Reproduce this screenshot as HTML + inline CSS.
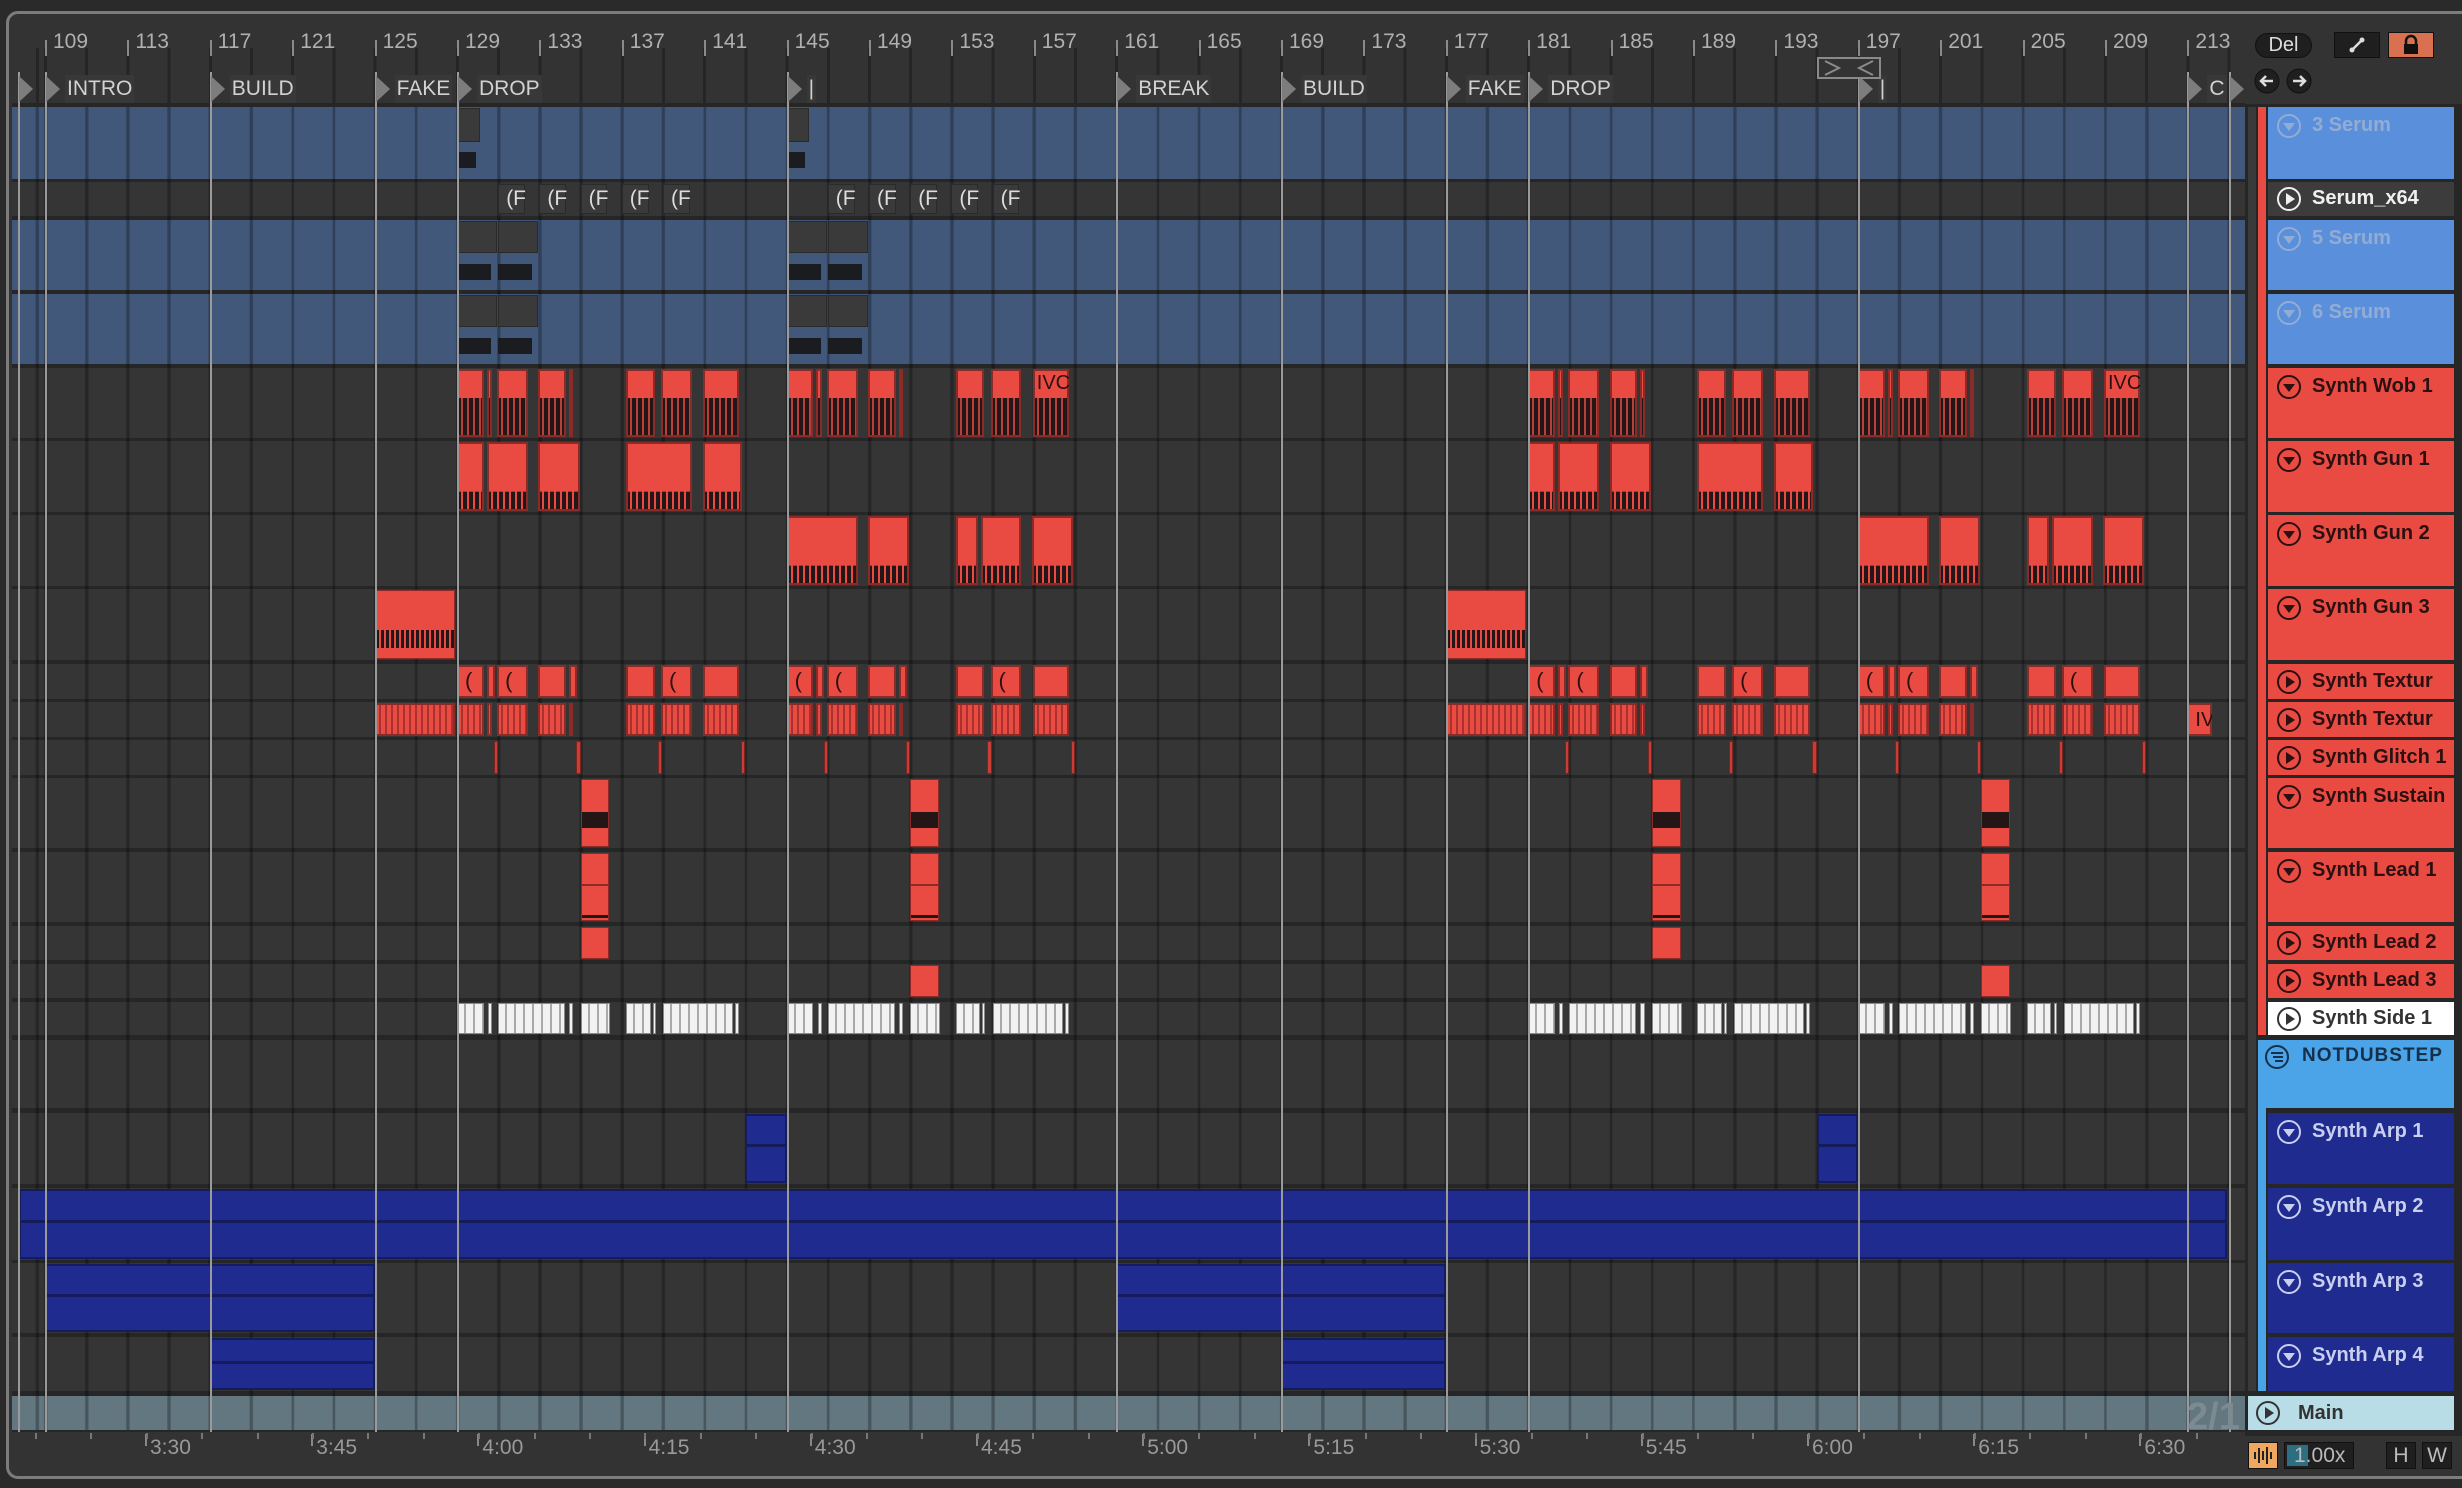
<!DOCTYPE html>
<html><head><meta charset="utf-8"><style>
*{margin:0;padding:0;box-sizing:border-box}
body{width:2462px;height:1488px;background:#2a2a2a;overflow:hidden;position:relative;font-family:"Liberation Sans",sans-serif}
.a{position:absolute}
#frame{left:6px;top:11px;width:2470px;height:1468px;border:3px solid #7c7c7c;border-radius:12px;background:#333}
.row{position:absolute;left:12px;width:2233px;background:#353535}
.serum{background:#41587a}
.mainrow{background:#627780}
.grid{position:absolute;left:12px;width:2233px;background:repeating-linear-gradient(90deg,rgba(0,0,0,.28) 0 3px,transparent 3px 41.2px);background-position:32px 0}
.cl{position:absolute}
.red{background:#e94b43;box-shadow:inset 0 0 0 1px #8a2b27}
.wob{background:linear-gradient(#e94b43,#e94b43) top/100% 43% no-repeat,repeating-linear-gradient(90deg,#241616 0 4px,#b8403a 4px 6px);box-shadow:inset 0 0 0 2px #8a2b27}
.gun{background:linear-gradient(#e94b43,#e94b43) top/100% 72% no-repeat,repeating-linear-gradient(90deg,#241616 0 4px,#e94b43 4px 6px);box-shadow:inset 0 0 0 2px #8a2b27}
.tx1{background:#e94b43;box-shadow:inset 0 0 0 2px #8a2b27;color:#2a1010;font-size:22px;line-height:32px;padding-left:8px;overflow:hidden}
.tx2{background:repeating-linear-gradient(90deg,#e94b43 0 4px,#a8332e 4px 6px);box-shadow:inset 0 0 0 2px #8a2b27}
.gl{background:#c93d36;box-shadow:inset 0 0 0 1px #7a2420}
.side{background:repeating-linear-gradient(90deg,#f2f2f2 0 7px,#a9a9a9 7px 9px);box-shadow:inset 0 0 0 1px #888}
.blue{background:#1f2b8f;box-shadow:inset 0 0 0 2px #141c5c}
.gray{background:#3a3a3a;box-shadow:inset 0 0 0 1px #2a2a2a}
.blk{background:#1b1c1f}
.loc{position:absolute;top:72px;width:2px;height:1360px;background:#9a9a9a}
.tri{position:absolute;top:76px;width:0;height:0;border-top:13px solid transparent;border-bottom:13px solid transparent;border-left:14px solid #7d7d7d}
.ll{position:absolute;top:75px;height:28px;line-height:28px;font-size:21px;color:#d2d2d2;background:#383838;padding:0 2px}
.num{position:absolute;top:30px;font-size:21px;color:#b0b0b0}
.tk{position:absolute;background:#222}
.hd{position:absolute;left:2268px;width:186px;font-weight:bold;font-size:20px;white-space:nowrap;overflow:hidden}
.hd svg{position:absolute;left:8px}
.hd span{position:absolute;left:44px}
.tm{position:absolute;top:1436px;font-size:21px;color:#9a9a9a}
</style></head><body>
<div id="frame" class="a"></div>
<div id="c"></div>
<script>
const C=document.getElementById('c');let h='';
const X=b=>45+(b-109)*20.6;
const R={s3:[107,72],sx:[182,34],s5:[220,70],s6:[294,70],wob:[368,70],g1:[441,71],g2:[515,71],g3:[589,71],t1:[664,35],t2:[702,35],gl:[740,35],su:[778,70],l1:[852,70],l2:[926,34],l3:[964,34],sd:[1002,33],nd:[1040,68],a1:[1113,71],a2:[1188,72],a3:[1263,70],a4:[1337,54],mn:[1396,34]};
h+=`<div class="a" style="left:12px;top:104px;width:2233px;height:1328px;background:#262626"></div>`;
for(const k in R){const [t,hh]=R[k];let c='row';if(k=='s3'||k=='s5'||k=='s6')c+=' serum';if(k=='mn')c+=' mainrow';h+=`<div class="${c}" style="top:${t}px;height:${hh}px"></div>`;}
h+=`<div class="grid" style="top:107px;height:1323px"></div>`;
h+=`<div class="grid" style="top:48px;height:56px"></div>`;
for(let b=109;b<=213;b+=4){const x=X(b);h+=`<div class="tk" style="left:${x}px;top:40px;width:2px;height:16px;background:#8a8a8a"></div><div class="num" style="left:${x+8}px">${b}</div>`;}
h+=`<div class="a" style="left:12px;top:103px;width:2233px;height:4px;background:#262626"></div>`;
function cl(row,b0,b1,cls,inner='',yo=1,hh=null){const [t,H]=R[row];const x0=X(b0),x1=X(b1);h+=`<div class="cl ${cls}" style="left:${x0}px;top:${t+yo}px;width:${x1-x0}px;height:${hh==null?H-2:hh}px">${inner}</div>`;}
for(const D of [129,145]){
 cl('s3',D,D+1.1,'gray','',1,34);cl('s3',D,D+0.9,'blk','',45,16);
 for(const r of ['s5','s6']){cl(r,D,D+1.95,'gray','',1,32);cl(r,D+2,D+3.95,'gray','',1,32);cl(r,D,D+1.65,'blk','',44,16);cl(r,D+2,D+3.65,'blk','',44,16);}
 for(let i=0;i<5;i++){const s=D+2+i*2;cl('sx',s,s+1.3,'gray','<span style="position:absolute;left:8px;top:3px;font-size:21px;color:#ddd">(F</span>',2,30);}
}
const P=[[0,1.3],[1.45,1.7],[1.95,3.45],[3.95,5.3],[5.45,5.65],[8.2,9.6],[9.9,11.4],[11.95,13.7]];
const PS=[[0,1.3],[1.5,1.7],[2,5.25],[5.45,5.65],[6,7.45],[8.2,9.4],[9.5,9.65],[10,13.4],[13.5,13.7]];
const G1=[[0,1.3],[1.45,3.45],[3.95,5.95],[8.2,11.4],[11.95,13.85]];
const G2=[[0,3.45],[3.95,5.95],[8.2,9.3],[9.45,11.4],[11.9,13.9]];
for(const D of [129,145,181,197]){
 const second=(D==145||D==197);
 P.forEach((p,i)=>{cl('wob',D+p[0],D+p[1],'wob',(second&&i==7)?'<span style="position:absolute;left:4px;top:3px;font-size:20px;color:#2a1010">IVC</span>':'');
  cl('t1',D+p[0],D+p[1],'tx1',(p[1]-p[0]>1&&i%2==0)?'(':'');
  cl('t2',D+p[0],D+p[1],'tx2');});
 PS.forEach(p=>cl('sd',D+p[0],D+p[1],'side'));
 (second?G2:G1).forEach(p=>cl(second?'g2':'g1',D+p[0],D+p[1],'gun'));
 [1.8,5.8,9.75,13.8].forEach(s=>cl('gl',s+D,s+D+0.2,'gl'));
 cl('su',D+6,D+7.4,'red','<div style="position:absolute;left:1px;right:1px;top:33px;height:16px;background:#241616"></div>');
 cl('l1',D+6,D+7.4,'red','<div style="position:absolute;left:1px;right:1px;top:31px;height:2px;background:#8a2b27"></div><div style="position:absolute;left:1px;right:1px;top:62px;height:3px;background:#241616"></div>');
 cl(second?'l3':'l2',D+6,D+7.4,'red');
}
cl('t2',213,214.2,'tx1','<span style="font-size:20px">IVC</span>');
for(const D of [125,177]){cl('g3',D,D+3.9,'red','<div style="position:absolute;left:1px;right:1px;top:40px;height:18px;background:repeating-linear-gradient(90deg,#241616 0 3px,#e94b43 3px 5px)"></div>');cl('t2',D,D+3.9,'tx2');}
const bi='<div style="position:absolute;left:2px;right:2px;top:44%;height:3px;background:#141c5c"></div>';
cl('a1',143,145,'blue',bi);cl('a1',195,197,'blue',bi);
h+=`<div class="cl blue" style="left:19px;top:1189px;width:2208px;height:70px">${bi}</div>`;
cl('a3',109,125,'blue',bi);cl('a3',161,177,'blue',bi);
cl('a4',117,125,'blue',bi);cl('a4',169,177,'blue',bi);
const L=[[109,'INTRO'],[117,'BUILD'],[125,'FAKE'],[129,'DROP'],[145,'|'],[161,'BREAK'],[169,'BUILD'],[177,'FAKE'],[181,'DROP'],[197,'|'],[213,'C']];
h+=`<div class="loc" style="left:18px"></div><div class="tri" style="left:19px"></div>`;
h+=`<div class="loc" style="left:2229px"></div><div class="tri" style="left:2230px"></div>`;
L.forEach(([b,t])=>{const x=X(b);h+=`<div class="loc" style="left:${x}px"></div><div class="tri" style="left:${x+1}px"></div><div class="ll" style="left:${x+20}px">${t}</div>`;});
h+=`<svg class="a" style="left:1817px;top:57px" width="64" height="22"><rect x="1" y="1" width="62" height="20" fill="#333" stroke="#8a8a8a" stroke-width="2"/><path d="M8 4 L22 11 L8 18 M56 4 L42 11 L56 18" fill="none" stroke="#8a8a8a" stroke-width="2"/></svg>`;
const T=['3:30','3:45','4:00','4:15','4:30','4:45','5:00','5:15','5:30','5:45','6:00','6:15','6:30'];
T.forEach((t,k)=>{const x=145+166.2*k;h+=`<div class="tk" style="left:${x}px;top:1434px;width:2px;height:12px;background:#888"></div><div class="tm" style="left:${x+5}px">${t}</div>`;});
for(let x=35;x<2240;x+=55.4)h+=`<div class="tk" style="left:${x}px;top:1433px;width:2px;height:6px;background:#777"></div>`;
h+=`<div class="a" style="left:2187px;top:1396px;font-size:38px;font-weight:bold;color:#7b8b91">2/1</div>`;
h+=`<div class="a" style="left:2245px;top:104px;width:217px;height:1332px;background:#262626"></div>`;
h+=`<div class="a" style="left:2248px;top:107px;width:8px;height:1284px;background:#3a3a3a"></div>`;
h+=`<div class="a" style="left:2258px;top:107px;width:8px;height:928px;background:#e94b43"></div>`;
h+=`<div class="a" style="left:2258px;top:1040px;width:8px;height:351px;background:#4ba3e8"></div>`;
const fold=(c,f)=>`<circle cx="13" cy="13" r="11" fill="none" stroke="${c}" stroke-width="2"/><path d="M7 10 L19 10 L13 18Z" fill="${f}"/>`;
const play=(c,f)=>`<circle cx="13" cy="13" r="11" fill="none" stroke="${c}" stroke-width="2"/><path d="M10 7 L19 13 L10 19Z" fill="${f}"/>`;
const H=[['s3','3 Serum','f','#5a8fdc','#93acd3'],['sx','Serum_x64','p','#3c3c3c','#f0f0f0'],['s5','5 Serum','f','#5a8fdc','#93acd3'],['s6','6 Serum','f','#5a8fdc','#93acd3'],
['wob','Synth Wob 1','f','#e94b43','#2a1010'],['g1','Synth Gun 1','f','#e94b43','#2a1010'],['g2','Synth Gun 2','f','#e94b43','#2a1010'],['g3','Synth Gun 3','f','#e94b43','#2a1010'],
['t1','Synth Textur','p','#e94b43','#2a1010'],['t2','Synth Textur','p','#e94b43','#2a1010'],['gl','Synth Glitch 1','p','#e94b43','#2a1010'],['su','Synth Sustain','f','#e94b43','#2a1010'],
['l1','Synth Lead 1','f','#e94b43','#2a1010'],['l2','Synth Lead 2','p','#e94b43','#2a1010'],['l3','Synth Lead 3','p','#e94b43','#2a1010'],['sd','Synth Side 1','p','#ffffff','#333'],
['a1','Synth Arp 1','f','#1f2b8f','#c9cff0'],['a2','Synth Arp 2','f','#1f2b8f','#c9cff0'],['a3','Synth Arp 3','f','#1f2b8f','#c9cff0'],['a4','Synth Arp 4','f','#1f2b8f','#c9cff0']];
H.forEach(([k,t,ic,bg,fg])=>{const [top,hh]=R[k];const cy=hh<40?hh/2:19;const icon=ic=='f'?fold(fg,fg):play(fg,fg);
h+=`<div class="hd" style="top:${top}px;height:${hh}px;background:${bg};color:${fg}"><svg style="top:${cy-13}px" width="26" height="26">${icon}</svg><span style="top:${cy-12}px">${t}</span></div>`;});
h+=`<div class="a" style="left:2258px;top:1040px;width:196px;height:68px;background:#4ba3e8;color:#15304a;font-weight:bold;font-size:19px;letter-spacing:1px"><svg class="a" style="left:6px;top:4px" width="26" height="26"><circle cx="13" cy="13" r="11" fill="none" stroke="#15304a" stroke-width="2"/><path d="M7 9H19M9 13H19M11 17H19" stroke="#15304a" stroke-width="2"/></svg><span class="a" style="left:44px;top:5px">NOTDUBSTEP</span></div>`;
h+=`<div class="a" style="left:2248px;top:1396px;width:206px;height:34px;background:#b8dde6;color:#333;font-weight:bold;font-size:20px"><svg class="a" style="left:7px;top:4px" width="26" height="26"><circle cx="13" cy="13" r="11" fill="none" stroke="#333" stroke-width="2"/><path d="M10 7 L19 13 L10 19Z" fill="#333"/></svg><span class="a" style="left:50px;top:6px">Main</span></div>`;
h+=`<div class="a" style="left:2255px;top:33px;width:57px;height:25px;border-radius:13px;background:#1f1f1f;border:1px solid #111;color:#ddd;font-size:20px;text-align:center;line-height:23px">Del</div>`;
h+=`<div class="a" style="left:2334px;top:32px;width:46px;height:26px;background:#1f1f1f;border:1px solid #111"><svg width="44" height="24"><path d="M17 17 L27 7" stroke="#ddd" stroke-width="2.5"/><circle cx="17" cy="17" r="2.5" fill="#ddd"/><circle cx="27" cy="7" r="2.5" fill="#ddd"/></svg></div>`;
h+=`<div class="a" style="left:2388px;top:32px;width:46px;height:26px;background:#d9704f;border:1px solid #111"><svg width="44" height="24"><path d="M17 11 V8 A5 5 0 0 1 27 8 V11" fill="none" stroke="#111" stroke-width="2.5"/><rect x="15" y="11" width="14" height="10" fill="#111"/></svg></div>`;
h+=`<svg class="a" style="left:2254px;top:67px" width="60" height="28"><circle cx="13" cy="14" r="12" fill="#1f1f1f" stroke="#111"/><circle cx="45" cy="14" r="12" fill="#1f1f1f" stroke="#111"/><path d="M19 14H8M12 9L7 14L12 19" fill="none" stroke="#ddd" stroke-width="2.5"/><path d="M39 14H50M46 9L51 14L46 19" fill="none" stroke="#ddd" stroke-width="2.5"/></svg>`;
h+=`<div class="a" style="left:2248px;top:1442px;width:30px;height:27px;background:#f0a860;border:1px solid #111"><svg width="28" height="25"><path d="M6 9V16M10 5V20M14 8V17M18 4V21M22 9V16" stroke="#222" stroke-width="2"/></svg></div>`;
h+=`<div class="a" style="left:2284px;top:1442px;width:70px;height:27px;background:#1f1f1f;border:1px solid #111"><div class="a" style="left:2px;top:2px;width:21px;height:21px;background:#2d6f80"></div><span class="a" style="left:9px;top:1px;color:#bbb;font-size:21px">1.00x</span></div>`;
h+=`<div class="a" style="left:2386px;top:1442px;width:30px;height:27px;background:#1f1f1f;border:1px solid #111;color:#bbb;font-size:21px;text-align:center;line-height:25px">H</div>`;
h+=`<div class="a" style="left:2422px;top:1442px;width:30px;height:27px;background:#1f1f1f;border:1px solid #111;color:#bbb;font-size:21px;text-align:center;line-height:25px">W</div>`;
C.innerHTML=h;
</script>
</body></html>
